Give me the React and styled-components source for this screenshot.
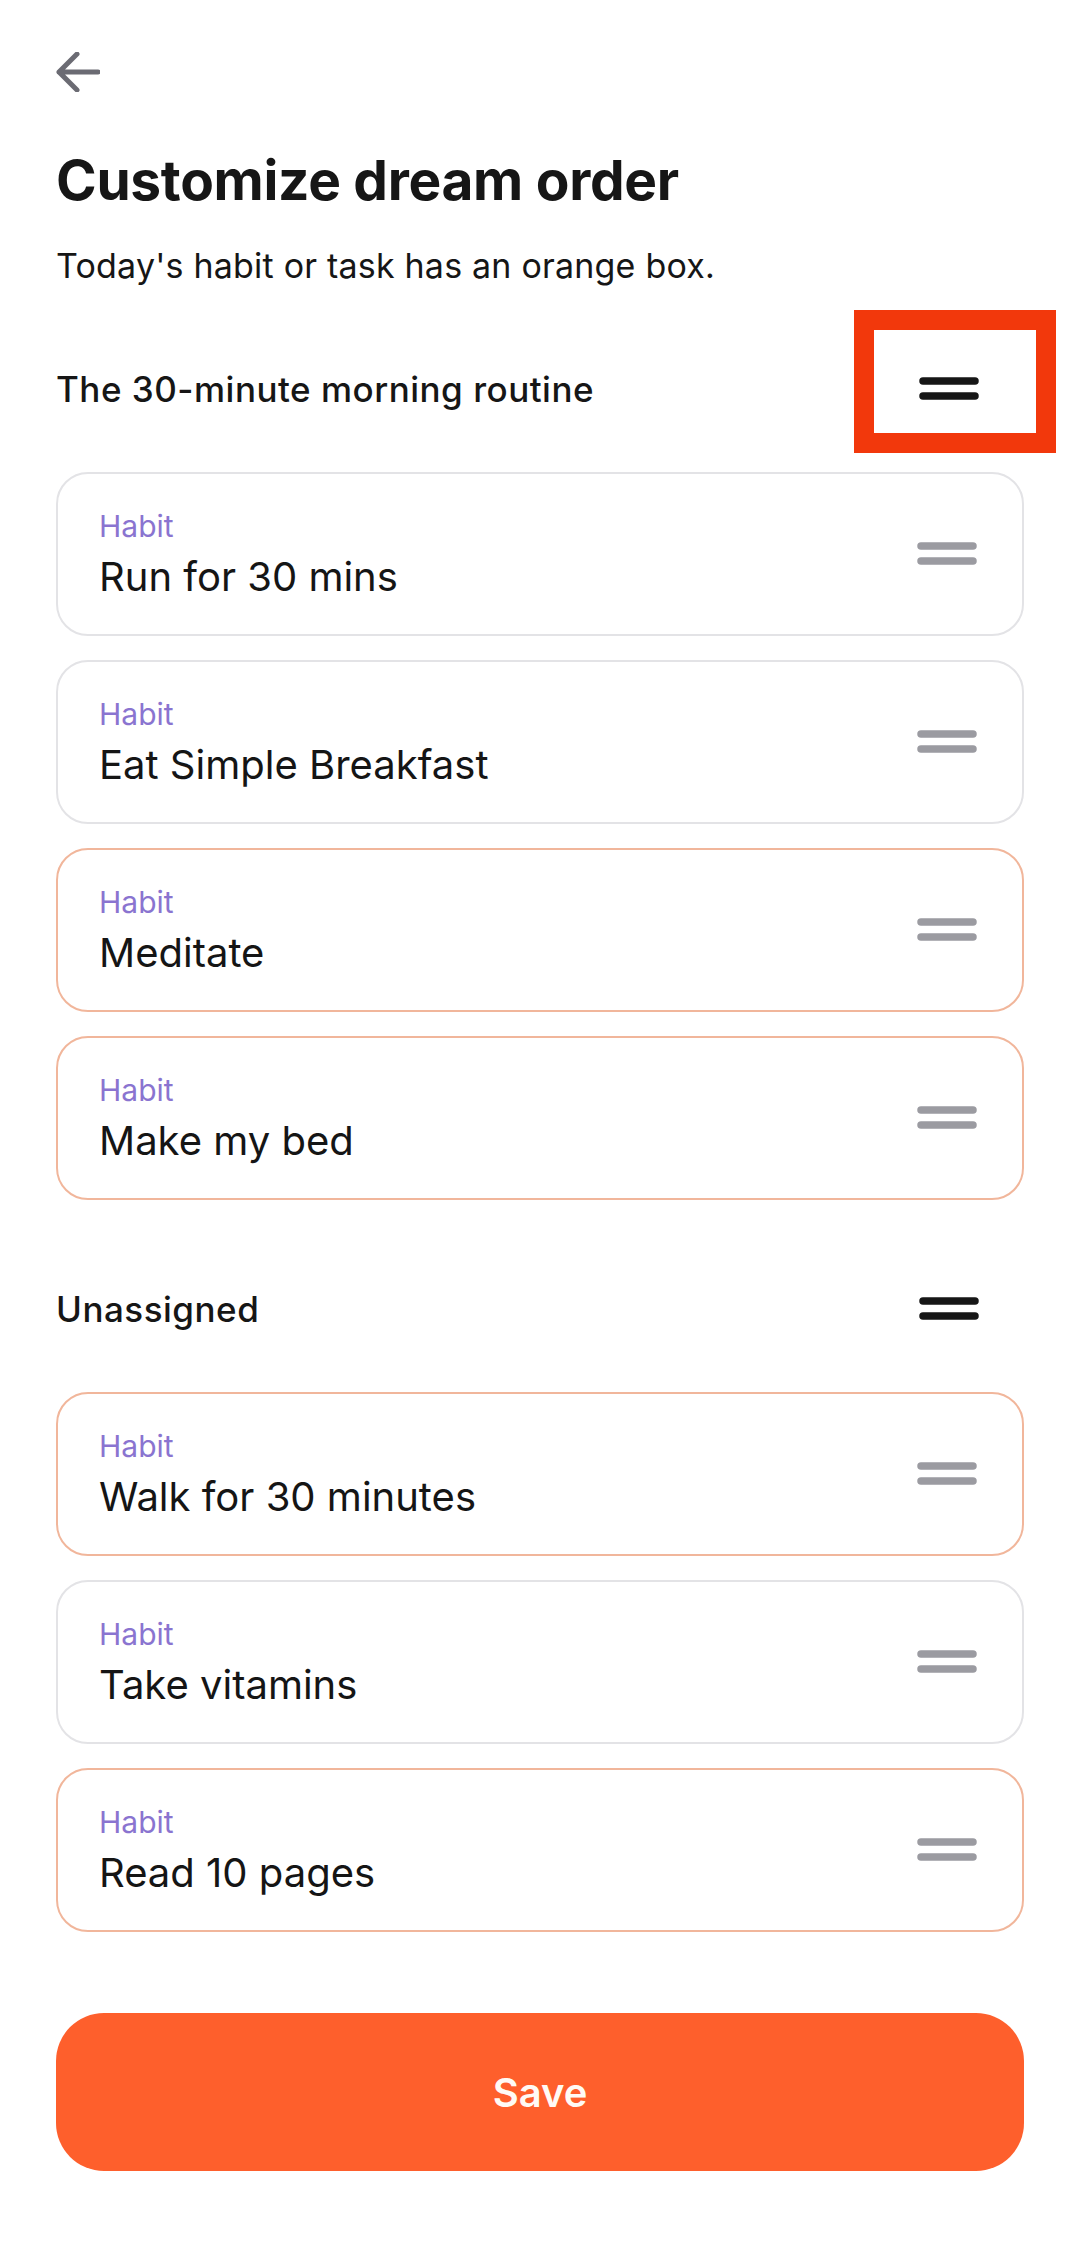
import React from "react";
import styled, { createGlobalStyle } from "styled-components";

const GlobalStyle = createGlobalStyle`
  html, body {
    margin: 0;
    padding: 0;
    background: #ffffff;
  }
  * {
    box-sizing: border-box;
  }
`;

const Page = styled.div`
  width: 1080px;
  min-height: 2246px;
  padding: 52px 56px 0 56px;
  font-family: Inter, "Noto Sans", sans-serif;
  color: #161616;
  background: #ffffff;
`;

const BackButton = styled.button`
  display: block;
  width: 44px;
  height: 40px;
  padding: 0;
  border: none;
  background: none;
  cursor: pointer;
`;

const Title = styled.h1`
  margin: 55px 0 0 0;
  font-size: 55px;
  line-height: 66px;
  font-weight: 700;
  letter-spacing: -0.3px;
`;

const Subtitle = styled.p`
  margin: 32px 0 0 0;
  font-size: 34px;
  line-height: 41px;
  font-weight: 400;
  letter-spacing: 0.2px;
`;

const Section = styled.section`
  margin-top: ${(props) => props.top}px;
`;

const SectionHeader = styled.div`
  display: flex;
  align-items: center;
  justify-content: space-between;
  padding-right: 45px;
  height: 42px;
`;

const SectionTitle = styled.h2`
  margin: 0;
  font-size: 35px;
  line-height: 42px;
  font-weight: 500;
  letter-spacing: 0.5px;
`;

const HandleWrap = styled.div`
  position: relative;
  display: flex;
  align-items: center;
`;

const Highlight = styled.div`
  position: absolute;
  left: -65px;
  top: -67px;
  width: 202px;
  height: 143px;
  border: 20px solid #f2380c;
  pointer-events: none;
`;

const List = styled.div`
  display: flex;
  flex-direction: column;
  gap: 24px;
  margin-top: 62px;
`;

const Card = styled.div`
  display: flex;
  align-items: center;
  justify-content: space-between;
  height: 164px;
  padding: 0 45px 0 41px;
  border: 2px solid ${(props) => (props.today ? "#f1b69b" : "#e3e3e6")};
  border-radius: 32px;
  background: #ffffff;
`;

const CardText = styled.div`
  display: flex;
  flex-direction: column;
`;

const Kind = styled.span`
  font-size: 30px;
  line-height: 36px;
  color: #8a74d0;
`;

const Name = styled.span`
  margin-top: 9px;
  font-size: 40px;
  line-height: 48px;
  color: #151515;
`;

const SaveButton = styled.button`
  display: block;
  width: 100%;
  height: 158px;
  margin-top: 81px;
  border: none;
  border-radius: 48px;
  background: #fe5f2c;
  color: #fffaf5;
  font-family: Inter, "Noto Sans", sans-serif;
  font-size: 40px;
  font-weight: 600;
  cursor: pointer;
`;

const ArrowLeft = () => (
  <svg width="44" height="40" viewBox="0 0 44 40" fill="none">
    <path
      d="M21 2 L3 20 L21 38 M3 20 H42"
      stroke="#6b6b73"
      strokeWidth="5"
      strokeLinecap="round"
      strokeLinejoin="round"
    />
  </svg>
);

const Grip = ({ color }) => (
  <svg width="60" height="24" viewBox="0 0 60 24">
    <line x1="4" y1="4" x2="56" y2="4" stroke={color} strokeWidth="7.5" strokeLinecap="round" />
    <line x1="4" y1="19" x2="56" y2="19" stroke={color} strokeWidth="7.5" strokeLinecap="round" />
  </svg>
);

const routine = [
  { name: "Run for 30 mins", today: false },
  { name: "Eat Simple Breakfast", today: false },
  { name: "Meditate", today: true },
  { name: "Make my bed", today: true },
];

const unassigned = [
  { name: "Walk for 30 minutes", today: true },
  { name: "Take vitamins", today: false },
  { name: "Read 10 pages", today: true },
];

const HabitList = ({ items }) => (
  <List>
    {items.map((item) => (
      <Card key={item.name} today={item.today}>
        <CardText>
          <Kind>Habit</Kind>
          <Name>{item.name}</Name>
        </CardText>
        <Grip color="#9b9ba1" />
      </Card>
    ))}
  </List>
);

export default function App() {
  return (
    <>
      <GlobalStyle />
      <Page>
        <BackButton aria-label="Back">
          <ArrowLeft />
        </BackButton>
        <Title>Customize dream order</Title>
        <Subtitle>Today's habit or task has an orange box.</Subtitle>

        <Section top={82}>
          <SectionHeader>
            <SectionTitle>The 30-minute morning routine</SectionTitle>
            <HandleWrap>
              <Grip color="#161616" />
              <Highlight />
            </HandleWrap>
          </SectionHeader>
          <HabitList items={routine} />
        </Section>

        <Section top={88}>
          <SectionHeader>
            <SectionTitle>Unassigned</SectionTitle>
            <Grip color="#161616" />
          </SectionHeader>
          <HabitList items={unassigned} />
        </Section>

        <SaveButton>Save</SaveButton>
      </Page>
    </>
  );
}
